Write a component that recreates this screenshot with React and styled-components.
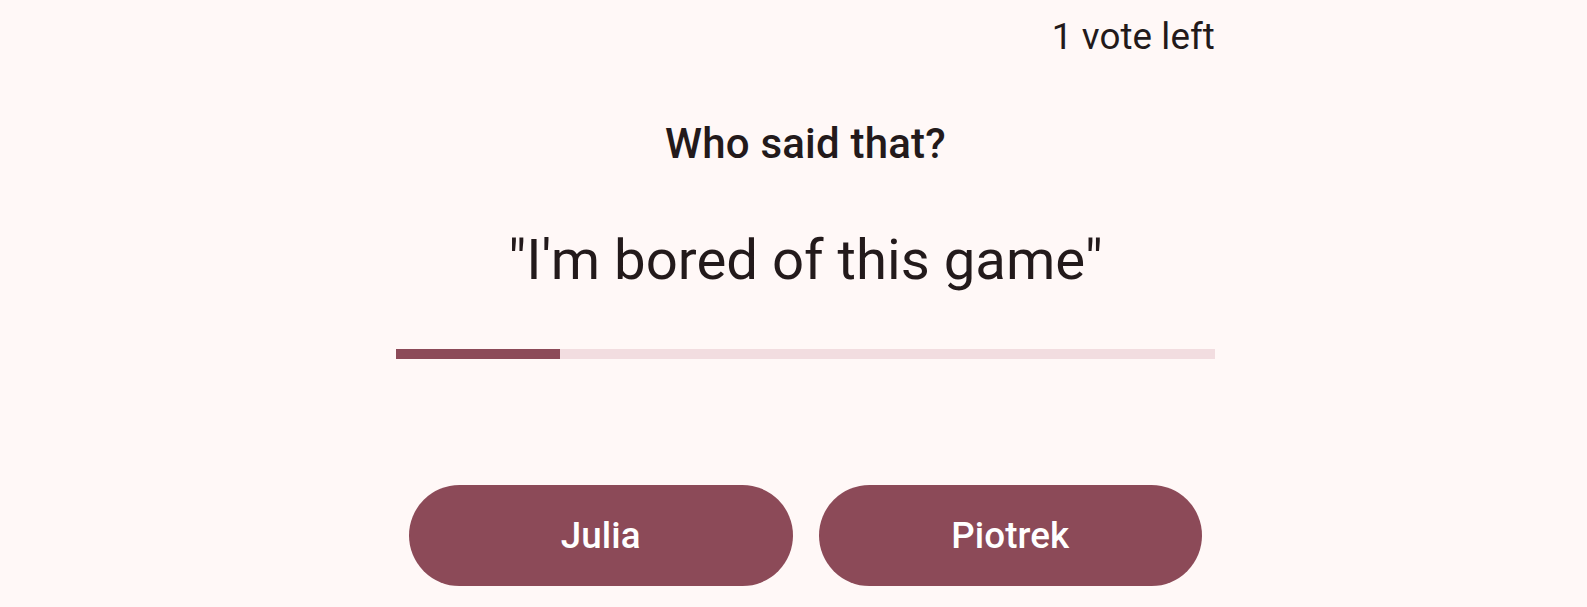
import React from "react";
import styled, { createGlobalStyle } from "styled-components";

const GlobalStyle = createGlobalStyle`
  html, body {
    margin: 0;
    padding: 0;
    background: #fff8f7;
  }
  body {
    font-family: Roboto, "Noto Sans", sans-serif;
    color: #231a1b;
  }
`;

const Screen = styled.div`
  min-height: 607px;
  background: #fff8f7;
  display: flex;
  justify-content: flex-start;
`;

const Column = styled.div`
  width: 819px;
  margin-left: 396px;
  padding-top: 11px;
  display: flex;
  flex-direction: column;
`;

const VotesLeft = styled.div`
  font-size: 36.75px;
  line-height: 52px;
  text-align: right;
  letter-spacing: 0.1px;
`;

const Question = styled.h2`
  margin: 49px 0 0;
  font-size: 42px;
  line-height: 63px;
  font-weight: 500;
  text-align: center;
  letter-spacing: 0.2px;
`;

const Quote = styled.p`
  margin: 49px 0 0;
  font-size: 56.3px;
  line-height: 73.5px;
  font-weight: 400;
  text-align: center;
`;

const Track = styled.div`
  margin-top: 51px;
  height: 10.5px;
  background: #f2dde0;
  overflow: hidden;
`;

const Fill = styled.div`
  height: 100%;
  background: #8c4a58;
`;

const Answers = styled.div`
  margin-top: 126px;
  padding: 0 13px;
  display: grid;
  grid-template-columns: 1fr 1fr;
  gap: 26px;
`;

const AnswerButton = styled.button`
  height: 101px;
  border: none;
  border-radius: 51px;
  background: #8c4a58;
  color: #ffffff;
  font-family: Roboto, "Noto Sans", sans-serif;
  font-size: 36.75px;
  font-weight: 500;
  letter-spacing: 0.1px;
  cursor: pointer;
`;

export default function App() {
  const progress = 0.2;
  const names = ["Julia", "Piotrek"];
  return (
    <>
      <GlobalStyle />
      <Screen>
        <Column>
          <VotesLeft>1 vote left</VotesLeft>
          <Question>Who said that?</Question>
          <Quote>"I'm bored of this game"</Quote>
          <Track>
            <Fill style={{ width: `${progress * 100}%` }} />
          </Track>
          <Answers>
            {names.map((n) => (
              <AnswerButton key={n}>{n}</AnswerButton>
            ))}
          </Answers>
        </Column>
      </Screen>
    </>
  );
}
